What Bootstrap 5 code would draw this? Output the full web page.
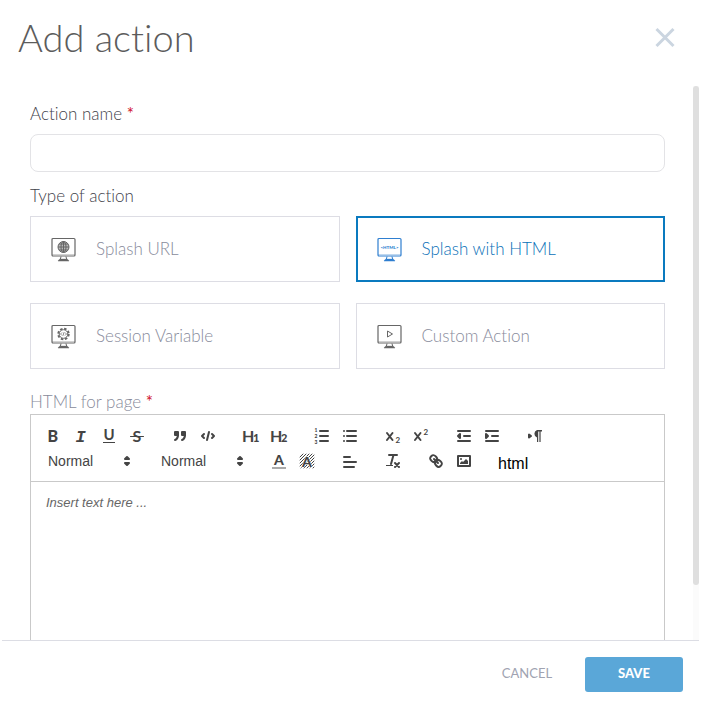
<!DOCTYPE html>
<html lang="en">
<head>
<meta charset="utf-8">
<meta name="viewport" content="width=device-width, initial-scale=1">
<title>Add action</title>
<link href="https://cdn.jsdelivr.net/npm/bootstrap@5.3.0/dist/css/bootstrap.min.css" rel="stylesheet">
<style>
body { font-family: Lato, sans-serif; font-size: 17px; line-height: 24px; color: #3f424a; background: #fff; font-variant-ligatures: none; }
.dialog-shell { margin: 0 13px 0 2px; }
.dialog-head { padding: 13px 21px 25px 16px; }
.dialog-title { font-size: 38px; line-height: 48px; font-weight: 300; color: #5c5c5c; }
.close-btn { width: 28px; height: 28px; }
.scroll-area { min-height: 0; }
.form-area { padding: 16px 28px 0 28px; min-width: 0; }
.req { color: #d0112b; font-weight: 400; }
.name-input { height: 38px; border: 1px solid #e3e3e6; border-radius: 8px; }
.type-set { margin-top: 12px; }
.type-legend { font-size: 17px; line-height: 24px; }
.muted-label, .choice { color: #888b9b; }
.muted-label { margin-top: 21px; }
.choice { height: 66px; padding: 0 20px; gap: 20px; border: 1px solid #dddde4; cursor: pointer; }
.choice svg { width: 25px; height: 25px; color: #666; }
.btn-check:checked + .choice { border: 2px solid #0a7abf; padding: 0 19px; color: #0a70b8; }
.btn-check:checked + .choice svg { color: #2f7fd0; }
.choices { --bs-gutter-x: 16px; --bs-gutter-y: 21px; }
.light-text { font-weight: 300; }
.editor { border: 1px solid #c9c9c9; border-bottom: 0; min-height: 0; }
.tools { padding: 9px 8px 7px; border-bottom: 1px solid #c9c9c9; font-family: "Liberation Sans", sans-serif; color: #444; }
.tool-row { gap: 15px; height: 25px; }
.tool { width: 28px; height: 24px; padding: 3px 5px; border: 0; background: none; color: #444; display: block; }
.tool svg { display: block; width: 18px; height: 18px; overflow: visible; }
.ln { fill: none; stroke: #444; stroke-width: 2; stroke-linecap: round; stroke-linejoin: round; }
.thin { stroke-width: 1; }
.solid { fill: #444; }
svg text { fill: #444; font-family: Lato, sans-serif; font-weight: 900; }
.picker { width: 98px; height: 24px; }
.picker select { appearance: none; width: 100%; height: 24px; padding: 0 9px; border: 0; background: none; font-size: 14px; line-height: 24px; color: #444; }
.picker svg { position: absolute; right: 1px; top: 3px; width: 18px; height: 18px; pointer-events: none; }
.html-btn { padding: 4px 5px 0; border: 0; background: none; font-size: 16px; line-height: 20px; color: #000; }
.edit-text { border: 0; resize: none; padding: 12px 15px; font: italic 13px/18px "Liberation Sans", sans-serif; outline: 0; }
.edit-text::placeholder { color: #666; }
.track { width: 6px; background: #fbfbfb; }
.thumb { width: 6px; height: 90%; border-radius: 3px; background: #dfdfdf; }
.dialog-foot { padding: 16px 16px 22px; border-top: 1px solid #dcdde4; gap: 16px; }
.foot-btn { height: 35px; min-width: 98px; border: 0; border-radius: 3px; font-size: 13px; line-height: 16px; padding: 0 16px 3px; }
.cancel-btn { background: none; color: #a0a3b1; min-width: 84px; }
.save-btn { background: #5aa7d8; color: #fff; font-weight: 900; }
</style>
</head>
<body>
<svg class="d-none" aria-hidden="true">
  <symbol id="monitor" viewBox="0 0 25 25">
    <rect x="1" y="1.5" width="23" height="17.5" rx="1" fill="none" stroke="currentColor" stroke-width="1.2"/>
    <path d="M1 17.5H24" stroke="currentColor" stroke-width=".6" opacity=".5"/>
    <path d="M10 19.5L9.3 22.5H15.7L15 19.5" fill="none" stroke="currentColor"/>
    <path d="M7 24L8.5 22.2H16.5L18 24Z" fill="currentColor" stroke="currentColor" stroke-width=".5"/>
  </symbol>
  <symbol id="arrows" viewBox="0 0 18 18"><path class="ln" d="M7 11L9 13L11 11ZM7 7L9 5L11 7Z" style="fill:#444"/></symbol>
</svg>

<form class="dialog-shell vh-100 d-flex flex-column">
  <header class="dialog-head d-flex justify-content-between align-items-center">
    <h1 class="dialog-title m-0">Add action</h1>
    <button type="button" class="close-btn btn p-0" aria-label="Close">
      <svg width="28" height="28" viewBox="0 0 28 28" class="d-block"><path d="M5.500 5L22.500 22M22.500 5L5.500 22" stroke="#cbd5e0" stroke-width="3"/></svg>
    </button>
  </header>

  <div class="scroll-area d-flex flex-grow-1 overflow-hidden">
    <main class="form-area d-flex flex-column flex-grow-1">
      <label for="actionName" class="light-text mb-2">Action name <span class="req">*</span></label>
      <input id="actionName" type="text" class="name-input form-control flex-shrink-0">
      <fieldset class="type-set flex-shrink-0">
        <legend class="type-legend light-text float-none mb-2">Type of action</legend>
        <div class="row choices">
          <div class="col-6">
            <input class="btn-check" type="radio" name="kind" id="kUrl">
            <label class="choice light-text d-flex align-items-center" for="kUrl">
              <svg viewBox="0 0 25 25"><use href="#monitor"/><circle cx="12.500" cy="10" r="5.500" fill="currentColor" opacity=".45"/><g fill="none" stroke="currentColor"><circle cx="12.500" cy="10" r="5.500"/><ellipse cx="12.500" cy="10" rx="2.500" ry="5.500"/><path d="M7 10H18M12.500 4.500V15.500M8 7H17M8 13H17"/></g></svg>
              <span>Splash URL</span>
            </label>
          </div>
          <div class="col-6">
            <input class="btn-check" type="radio" name="kind" id="kHtml" checked>
            <label class="choice light-text d-flex align-items-center" for="kHtml">
              <svg viewBox="0 0 25 25"><use href="#monitor"/><text x="12.500" y="11.500" text-anchor="middle" font-size="4.500" style="fill:currentColor">&lt;HTML&gt;</text></svg>
              <span>Splash with HTML</span>
            </label>
          </div>
          <div class="col-6">
            <input class="btn-check" type="radio" name="kind" id="kVar">
            <label class="choice light-text d-flex align-items-center" for="kVar">
              <svg viewBox="0 0 25 25"><use href="#monitor"/><g fill="none" stroke="currentColor"><circle cx="12.500" cy="10" r="5.300" stroke-width="1.800" stroke-dasharray="2.500 1.660"/><circle cx="12.500" cy="10" r="4.300"/><path d="M11 8.500L9.500 10L11 11.500M14 8.500L15.500 10L14 11.500M13 8.300L12 11.700" stroke-width=".8"/></g></svg>
              <span>Session Variable</span>
            </label>
          </div>
          <div class="col-6">
            <input class="btn-check" type="radio" name="kind" id="kCustom">
            <label class="choice light-text d-flex align-items-center" for="kCustom">
              <svg viewBox="0 0 25 25"><use href="#monitor"/><path d="M10.500 7L15.500 10L10.500 13Z" fill="none" stroke="currentColor"/></svg>
              <span>Custom Action</span>
            </label>
          </div>
        </div>
      </fieldset>

      <label for="pageHtml" class="muted-label light-text">HTML for page <span class="req">*</span></label>
      <div class="editor d-flex flex-column flex-grow-1">
        <div class="tools">
          <div class="tool-row d-flex">
            <div class="d-flex">
              <button type="button" class="tool" aria-label="Bold"><svg viewBox="0 0 18 18"><text x="3.500" y="15" font-size="16">B</text></svg></button>
              <button type="button" class="tool" aria-label="Italic"><svg viewBox="0 0 18 18"><text x="3.500" y="15" font-size="17" style="font-family:'Liberation Mono',monospace;font-weight:700;font-style:italic">I</text></svg></button>
              <button type="button" class="tool" aria-label="Underline"><svg viewBox="0 0 18 18"><text x="9" y="13" font-size="15" text-anchor="middle" style="font-weight:700">U</text><rect class="solid" x="3" y="15" width="12" height="1"/></svg></button>
              <button type="button" class="tool" aria-label="Strike"><svg viewBox="0 0 18 18"><text x="9" y="15" font-size="16" text-anchor="middle" style="font-weight:700">S</text><path class="ln thin" d="M2.500 9.500H15.500"/></svg></button>
            </div>
            <div class="d-flex">
              <button type="button" class="tool" aria-label="Quote"><svg viewBox="0 0 18 18"><g class="ln" style="fill:#444"><rect x="4" y="5" width="3" height="3"/><rect x="11" y="5" width="3" height="3"/><path d="M7 8c0 4.031-3 5-3 5M14 8c0 4.031-3 5-3 5"/></g></svg></button>
              <button type="button" class="tool" aria-label="Code"><svg viewBox="0 0 18 18"><path class="ln" d="M5 7L3 9L5 11M13 7L15 9L13 11M10 5L8 13"/></svg></button>
            </div>
            <div class="d-flex">
              <button type="button" class="tool" aria-label="Heading 1"><svg viewBox="0 0 18 18"><text x="0" y="15" font-size="16" style="font-weight:700">H</text><text x="11" y="15" font-size="11">1</text></svg></button>
              <button type="button" class="tool" aria-label="Heading 2"><svg viewBox="0 0 18 18"><text x="0" y="15" font-size="16" style="font-weight:700">H</text><text x="11" y="15" font-size="11">2</text></svg></button>
            </div>
            <div class="d-flex">
              <button type="button" class="tool" aria-label="Numbered list"><svg viewBox="0 0 18 18"><path class="ln" d="M7 4H15M7 9H15M7 14H15"/><g font-size="5"><text x="1.500" y="5">1</text><text x="1.500" y="11">2</text><text x="1.500" y="17">3</text></g></svg></button>
              <button type="button" class="tool" aria-label="Bullet list"><svg viewBox="0 0 18 18"><path class="ln" d="M6 4H15M6 9H15M6 14H15M3 4H3M3 9H3M3 14H3"/></svg></button>
            </div>
            <div class="d-flex">
              <button type="button" class="tool" aria-label="Subscript"><svg viewBox="0 0 18 18"><path class="ln" d="M3 6L8.500 13M8.500 6L3 13"/><text x="11.500" y="16" font-size="8" style="font-weight:700">2</text></svg></button>
              <button type="button" class="tool" aria-label="Superscript"><svg viewBox="0 0 18 18"><path class="ln" d="M3 6L8.500 13M8.500 6L3 13"/><text x="11.500" y="8" font-size="8" style="font-weight:700">2</text></svg></button>
            </div>
            <div class="d-flex">
              <button type="button" class="tool" aria-label="Outdent"><svg viewBox="0 0 18 18"><path class="ln" d="M3 4H15M3 14H15M9 9H15"/><path class="ln" style="fill:#444" d="M5 7V11L3 9Z"/></svg></button>
              <button type="button" class="tool" aria-label="Indent"><svg viewBox="0 0 18 18"><path class="ln" d="M3 4H15M3 14H15M9 9H15"/><path class="ln" style="fill:#444" d="M3 7V11L5 9Z"/></svg></button>
            </div>
            <div class="d-flex">
              <button type="button" class="tool" aria-label="Text direction"><svg viewBox="0 0 18 18"><path class="ln" style="fill:#444" d="M3 7.500V10.500L5 9Z"/><path class="solid" d="M16 3H11A4 4 0 0 0 11 10.500V15H12.200V4.500H13.400V15H14.600V4.500H16Z"/></svg></button>
            </div>
          </div>
          <div class="tool-row d-flex">
            <div class="picker position-relative"><select aria-label="Size"><option>Normal</option></select><svg><use href="#arrows"/></svg></div>
            <div class="picker position-relative"><select aria-label="Heading"><option>Normal</option></select><svg><use href="#arrows"/></svg></div>
            <div class="d-flex">
              <button type="button" class="tool" aria-label="Text colour"><svg viewBox="0 0 18 18"><rect x="2" y="15" width="14" height="2" fill="#aaa"/><text x="9" y="13" font-size="14" text-anchor="middle">A</text></svg></button>
              <button type="button" class="tool" aria-label="Background colour"><svg viewBox="0 0 18 18"><path class="ln thin" d="M2 5L5 2M2 8L8 2M2 11L11 2M2 14L14 2M3 16L16 3M6 16L16 6M9 16L16 9M12 16L16 12M15 16L16 15"/><text x="9" y="15" font-size="14" text-anchor="middle" style="stroke:#fff;stroke-width:1;paint-order:stroke">A</text></svg></button>
            </div>
            <div class="d-flex">
              <button type="button" class="tool" aria-label="Align"><svg viewBox="0 0 18 18"><path class="ln" d="M3 5H9M3 10H15M3 15H13"/></svg></button>
            </div>
            <div class="d-flex">
              <button type="button" class="tool" aria-label="Clear formatting"><svg viewBox="0 0 18 18"><path class="ln" d="M5 3H13M9.500 3L7 12"/><path class="solid" d="M2 13H9V14H2Z"/><path class="ln" d="M11 11L15 15M15 11L11 15"/></svg></button>
            </div>
            <div class="d-flex">
              <button type="button" class="tool" aria-label="Link"><svg viewBox="0 0 18 18"><path class="ln" d="M7 7L11 11"/><path class="ln" d="M8.900 4.577a3.476 3.476 0 0 1 .36 4.679A3.476 3.476 0 0 1 4.577 8.900C3.185 7.500 2.035 6.400 4.217 4.217S7.500 3.185 8.900 4.577Z"/><path class="ln" d="M13.423 9.100a3.476 3.476 0 0 0-4.679-.36 3.476 3.476 0 0 0 .36 4.679c1.392 1.392 2.500 2.542 4.679.36S14.815 10.500 13.423 9.100Z"/></svg></button>
              <button type="button" class="tool" aria-label="Image"><svg viewBox="0 0 18 18"><rect class="ln" x="3" y="4" width="12" height="10"/><circle class="solid" cx="6" cy="7" r="1"/><path class="solid" d="M5 12V11L7 9L8 10L11 7L13 9V12Z"/></svg></button>
            </div>
            <button type="button" class="html-btn">html</button>
          </div>
        </div>
        <textarea id="pageHtml" class="edit-text w-100 flex-grow-1" placeholder="Insert text here ..."></textarea>
      </div>
    </main>
    <div class="track flex-shrink-0"><div class="thumb"></div></div>
  </div>

  <footer class="dialog-foot d-flex justify-content-end">
    <button type="button" class="foot-btn cancel-btn">CANCEL</button>
    <button type="submit" class="foot-btn save-btn">SAVE</button>
  </footer>
</form>
<script src="https://cdn.jsdelivr.net/npm/bootstrap@5.3.0/dist/js/bootstrap.bundle.min.js"></script>
</body>
</html>
